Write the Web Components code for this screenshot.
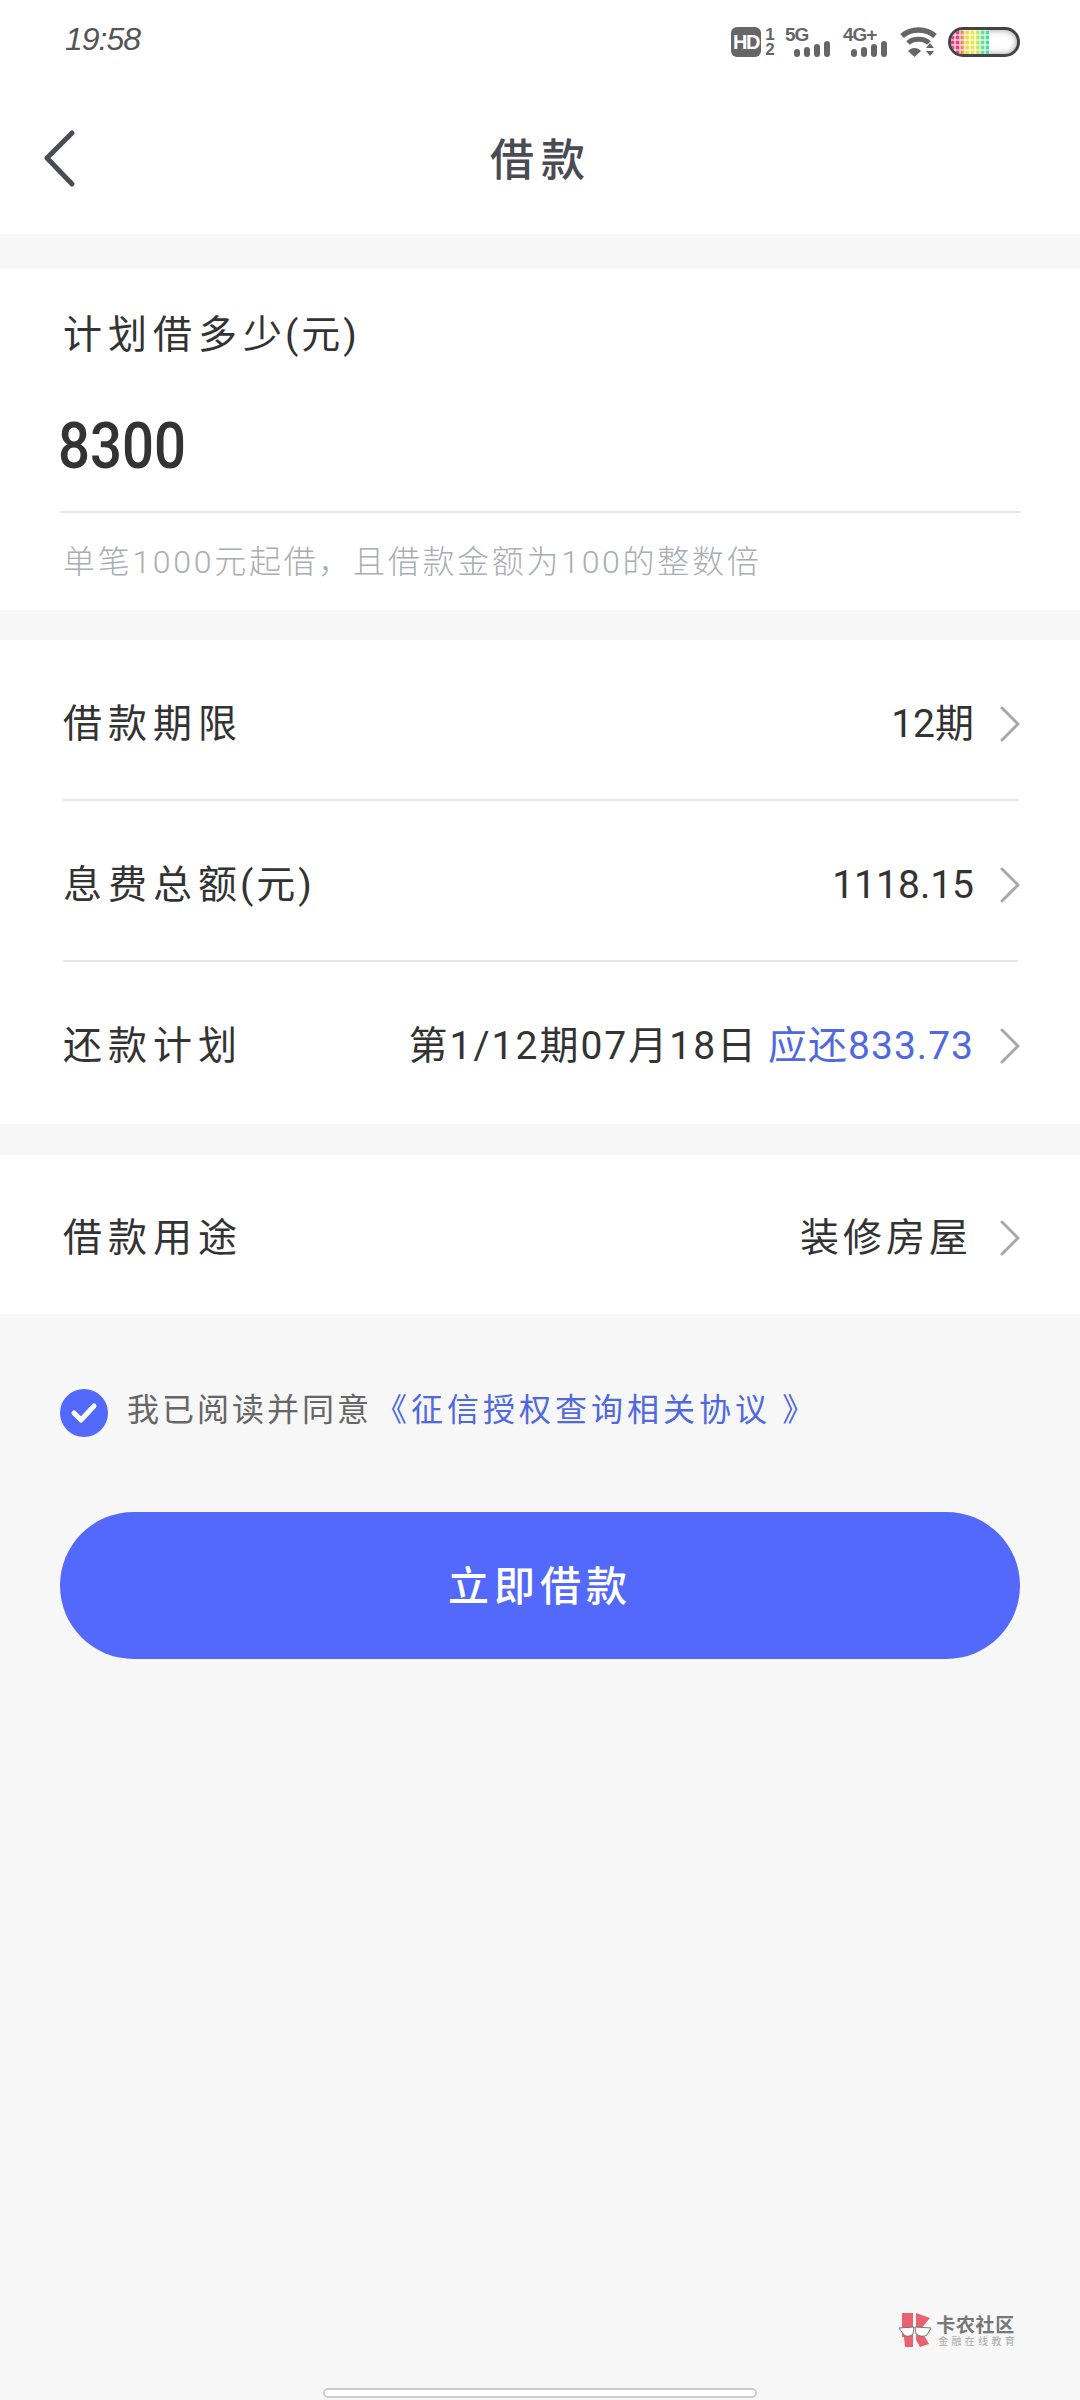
<!DOCTYPE html>
<html lang="zh-CN">
<head>
<meta charset="utf-8">
<title>借款</title>
<style>
  html, body { margin: 0; background: #f7f7f7; }
  body {
    width: 1080px;
    height: 2400px;
    overflow: hidden;
    font-family: Roboto, "Noto Sans CJK SC", sans-serif;
    display: flex;
    flex-direction: column;
  }
</style>
</head>
<body>
  <status-bar time="19:58"></status-bar>
  <nav-header>借款</nav-header>

  <amount-card label="计划借多少(元)" amount="8300" hint="单笔1000元起借，且借款金额为100的整数倍"></amount-card>

  <info-card style="margin-top:30px">
    <info-row label="借款期限"><span style="letter-spacing:0">12期</span></info-row>
    <info-row label="息费总额(元)"><span style="letter-spacing:0">1118.15</span></info-row>
    <info-row label="还款计划" last height="162">第1/12期07月18日<span style="color:#5069e0;margin-left:10px;letter-spacing:1px">应还833.73</span></info-row>
  </info-card>

  <info-card style="margin-top:31px">
    <info-row label="借款用途" last height="159"><span style="letter-spacing:4px;margin-right:2px">装修房屋</span></info-row>
  </info-card>

  <agree-line>我已阅读并同意<span slot="link">《征信授权查询相关协议 》</span></agree-line>
  <primary-button>立即借款</primary-button>

  <brand-mark></brand-mark>
  <home-bar></home-bar>

<script>
// parens in the labels sit tighter than the characters around them
const tightParens = (text) => text.replace(/\(.*\)/, (m) => `<span class="paren">${m}</span>`);

class StatusBar extends HTMLElement {
  constructor() {
    super();
    this.attachShadow({ mode: "open" });
  }

  connectedCallback() {
    const bars = `
      <svg class="bars" width="36" height="16" viewBox="0 0 36 16">
        <rect x="0" y="8" width="6" height="8" rx="3"/>
        <rect x="10" y="6" width="6" height="10" rx="3"/>
        <rect x="20" y="3" width="6" height="13" rx="3"/>
        <rect x="30" y="0" width="6" height="16" rx="3"/>
      </svg>`;
    this.shadowRoot.innerHTML = `
    <style>
      :host { display: flex; justify-content: space-between; align-items: flex-start;
        height: 57px; padding: 27px 60px 0 65px; background: #fff; }
      .time { font: italic 400 32px/24px "Liberation Sans", sans-serif; color: #555; letter-spacing: -1px; }
      .icons { display: flex; align-items: flex-start; height: 30px; }
      .hd { width: 30px; height: 30px; border-radius: 6px; background: #666; color: #fff;
        font: 700 20px/30px "Liberation Sans", sans-serif; text-align: center; letter-spacing: -1.500px; }
      .sim { width: 12px; margin: 0 9px 0 3px; font: 700 17px/15px "Liberation Sans", sans-serif;
        color: #666; text-align: center; }
      svg { display: block; fill: #666; }
      .net { width: 45px; margin-right: 13px; font: 700 19px/15px "Liberation Sans", sans-serif;
        color: #666; letter-spacing: -1px; white-space: nowrap; }
      .net + .net { width: 44px; }
      .bars { margin: -1px 0 0 9px; }
      .net + .net .bars { margin-left: 8px; }
      .wifi { margin-right: 11px; }
      .battery { width: 66px; height: 24px; border: 3px solid #444; border-radius: 15px; background: #fff;
        box-shadow: inset 0 0 6px #999; overflow: hidden; }
      .level { width: 38px; height: 100%;
        background:
          repeating-linear-gradient(90deg, transparent 0 3px, #fff8 3px 5px),
          repeating-linear-gradient(0deg, transparent 0 3px, #fff8 3px 5px),
          linear-gradient(90deg, #e6417f 0 22%, #eea94c 32%, #e9e64f 45% 65%, #7fe38a 78%, #3fd9a2 100%); }
    </style>
    <div class="time">${this.getAttribute("time")}</div>
    <div class="icons">
      <div class="hd">HD</div>
      <div class="sim">1<br>2</div>
      <div class="net">5G${bars}</div>
      <div class="net">4G+${bars}</div>
      <svg class="wifi" width="37" height="30" viewBox="0 0 37 30">
        <path d="M2 9C11 1 26 1 35 9" fill="none" stroke="#666" stroke-width="5.500"/>
        <path d="M8 16C13 11 24 11 29 16" fill="none" stroke="#666" stroke-width="5"/>
        <path d="M8 24C11.500 20 17.500 20 21 24L14.500 30Z"/>
        <path d="M26 21l4-5 4 5zM26 24h8l-4 5z"/>
      </svg>
      <div class="battery"><div class="level"></div></div>
    </div>`;
  }
}

class NavHeader extends HTMLElement {
  constructor() {
    super();
    this.attachShadow({ mode: "open" });
    this.shadowRoot.innerHTML = `
    <style>
      :host { display: flex; align-items: center; height: 150px; background: #fff; position: relative;
        justify-content: center; }
      svg { position: absolute; left: 42px; top: 45px; }
      h1 { margin: -4px 0 0 2px; font: 500 44px/50px "Noto Sans CJK SC", sans-serif; color: #4a4b55; letter-spacing: 7px; }
    </style>
    <svg width="36" height="60" viewBox="0 0 36 60" fill="none" stroke="#4a4b55" stroke-width="5" stroke-linecap="round" stroke-linejoin="round">
      <path d="M30 4L5 29L30 55"/>
    </svg>
    <h1><slot></slot></h1>`;
  }
}

class AmountCard extends HTMLElement {
  constructor() {
    super();
    this.attachShadow({ mode: "open" });
  }

  connectedCallback() {
    this.shadowRoot.innerHTML = `
    <style>
      :host { display: block; margin-top: 35px; padding: 46px 59px 28px 60px; background: #fff; }
      .label { padding-left: 3px; font: 400 39px/40px Roboto, "Noto Sans CJK SC", sans-serif; color: #333; letter-spacing: 6px; }
      .paren { letter-spacing: 3px; margin-left: -3px; }
      .amount { margin: 60px 0 0 -2px; font: 500 64px/64px Roboto, sans-serif; color: #333; }
      .amount span { display: inline-block; transform: scaleX(.88); transform-origin: left center; }
      .line { margin-top: 32px; height: 2px; background: #e6e6e6; }
      .hint { margin-top: 29px; padding-left: 3px; font: 300 32px/40px Roboto, "Noto Sans CJK SC", sans-serif; color: #a9aeb3; letter-spacing: 2.700px; }
    </style>
    <div class="label">${tightParens(this.getAttribute("label"))}</div>
    <div class="amount"><span>${this.getAttribute("amount")}</span></div>
    <div class="line"></div>
    <div class="hint">${this.getAttribute("hint")}</div>`;
  }
}

class InfoCard extends HTMLElement {
  constructor() {
    super();
    this.attachShadow({ mode: "open" });
    this.shadowRoot.innerHTML = `
    <style>
      :host { display: block; background: #fff; padding: 0 62px 0 63px; }
    </style>
    <slot></slot>`;
  }
}

class InfoRow extends HTMLElement {
  constructor() {
    super();
    this.attachShadow({ mode: "open" });
  }

  connectedCallback() {
    const last = this.hasAttribute("last");
    const height = this.getAttribute("height") || 161;
    this.shadowRoot.innerHTML = `
    <style>
      :host { display: flex; align-items: center; justify-content: space-between; box-sizing: border-box;
        height: ${height}px; padding-top: 8px;
        border-bottom: 2px solid ${last ? "transparent" : "#e6e6e6"};
        font: 400 39px/44px Roboto, "Noto Sans CJK SC", sans-serif; color: #333; }
      .label { letter-spacing: 6px; }
      .paren { letter-spacing: 3px; margin-left: -3px; }
      .right { display: flex; align-items: center; letter-spacing: 2px; }
      svg { display: block; margin: 0 -2px 0 26px; }
    </style>
    <div class="label">${tightParens(this.getAttribute("label"))}</div>
    <div class="right">
      <div class="value"><slot></slot></div>
      <svg width="20" height="36" viewBox="0 0 20 36" fill="none" stroke="#a8a8a8" stroke-width="3" stroke-linecap="round" stroke-linejoin="round">
        <path d="M2 2L18 18L2 34"/>
      </svg>
    </div>`;
  }
}

class AgreeLine extends HTMLElement {
  constructor() {
    super();
    this.attachShadow({ mode: "open" });
    this.shadowRoot.innerHTML = `
    <style>
      :host { display: flex; align-items: center; gap: 19px; margin-top: 75px; padding-left: 60px;
        height: 48px; font: 400 32px/40px "Noto Sans CJK SC", sans-serif; color: #666; letter-spacing: 3px; }
      svg { display: block; flex: none; }
      .text { margin-top: -13px; }
      .link { color: #5069e0; letter-spacing: 4px; margin-left: 3px; }
    </style>
    <svg width="48" height="48" viewBox="0 0 48 48">
      <circle cx="24" cy="24" r="24" fill="#5269fb"/>
      <path d="M14 24L21 31L34 17" fill="none" stroke="#fff" stroke-width="5" stroke-linecap="round" stroke-linejoin="round"/>
    </svg>
    <div class="text"><slot></slot><span class="link"><slot name="link"></slot></span></div>`;
  }
}

class PrimaryButton extends HTMLElement {
  constructor() {
    super();
    this.attachShadow({ mode: "open" });
    this.shadowRoot.innerHTML = `
    <style>
      :host { display: flex; align-items: center; justify-content: center; height: 147px;
        margin: 75px 60px 0; border-radius: 74px; background: #5269fb; color: #fff;
        font: 500 41px/50px "Noto Sans CJK SC", sans-serif; letter-spacing: 5px; }
      span { margin-top: -5px; }
    </style>
    <span><slot></slot></span>`;
  }
}

class BrandMark extends HTMLElement {
  constructor() {
    super();
    this.attachShadow({ mode: "open" });
    this.shadowRoot.innerHTML = `
    <style>
      :host { display: flex; align-items: center; justify-content: flex-end; gap: 4px;
        margin-top: auto; padding-right: 62px; height: 34px; }
      svg { display: block; }
      .name { font: 700 19px/19px "Noto Sans CJK SC", sans-serif; color: #777; letter-spacing: .7px; }
      .sub { margin-top: 2px; padding-left: 2px; font: 400 10px/12px "Noto Sans CJK SC", sans-serif; color: #aaa; letter-spacing: 3.300px; white-space: nowrap; }
    </style>
    <svg width="34" height="34" viewBox="0 0 34 34">
      <path d="M4 0H15V34H7L6 24H4ZM18 0L32 5L22 17H18ZM18 17H23L31 31L22 34L18 27Z" fill="#e8636f"/>
      <g fill="#fff" stroke="#777" stroke-width="1">
        <path d="M1 15L16 14L15 21Q10 25 6 22Z"/>
        <path d="M17 14L33 15L29 22Q24 25 18 21Z"/>
      </g>
    </svg>
    <div>
      <div class="name">卡农社区</div>
      <div class="sub">金融在线教育</div>
    </div>`;
  }
}

class HomeBar extends HTMLElement {
  constructor() {
    super();
    this.attachShadow({ mode: "open" });
    this.shadowRoot.innerHTML = `
    <style>
      :host { display: block; box-sizing: border-box; width: 434px; height: 10px; margin: 41px auto 2px;
        border: 2px solid #ccc; border-radius: 5px; background: #fff; }
    </style>`;
  }
}

customElements.define("status-bar", StatusBar);
customElements.define("nav-header", NavHeader);
customElements.define("amount-card", AmountCard);
customElements.define("info-card", InfoCard);
customElements.define("info-row", InfoRow);
customElements.define("agree-line", AgreeLine);
customElements.define("primary-button", PrimaryButton);
customElements.define("brand-mark", BrandMark);
customElements.define("home-bar", HomeBar);
</script>
</body>
</html>
